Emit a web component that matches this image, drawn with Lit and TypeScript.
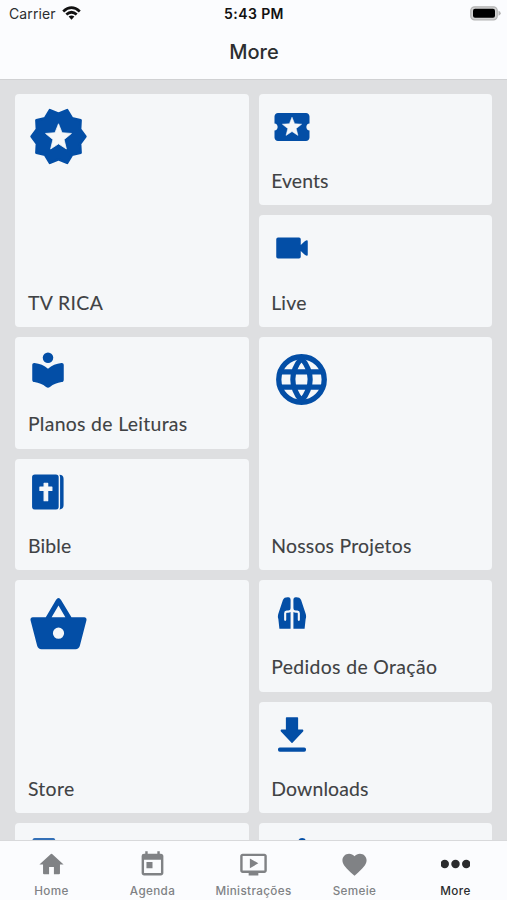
import { LitElement, html, svg, css, nothing } from "lit";
import { customElement, property } from "lit/decorators.js";

const icons: Record<string, unknown> = {
  badge: svg`<path stroke="currentColor" stroke-width="1" stroke-linejoin="round" d="M22.6 12 20.5 14.8 20.7 18.4 17.3 19.2 15.4 22.4 12 21 8.6 22.4 6.7 19.2 3.3 18.4 3.5 14.8 1.4 12 3.5 9.2 3.3 5.6 6.7 4.8 8.6 1.6 12 3 15.4 1.6 17.3 4.8 20.7 5.6 20.5 9.2Z"/><path class="cut" d="m12 7 1.4 3.5 3.7.3-2.9 2.4.9 3.7L12 14.9l-3.1 2 .9-3.7-2.9-2.4 3.7-.3Z"/>`,
  ticket: svg`<path d="M20.2 12c0-1.1.7-1.9 1.8-2V6c0-1.1-.9-2-2-2H4c-1.1 0-2 .9-2 2v4c1.1.1 1.8.9 1.8 2s-.7 1.9-1.8 2v4c0 1.1.9 2 2 2h16c1.1 0 2-.9 2-2v-4c-1.1-.1-1.8-.9-1.8-2z"/><path class="cut" d="m12 6.4 1.5 3.7 4 .3-3.1 2.5 1 3.9-3.4-2.2-3.4 2.2 1-3.9-3.1-2.5 4-.3Z"/>`,
  video: svg`<path d="M4 6h12a1 1 0 0 1 1 1v3.3l2.3-2.1Q21 7 21 8.3v7.4q0 1.3-1.7.1L17 13.7V17a1 1 0 0 1-1 1H4a1 1 0 0 1-1-1V7a1 1 0 0 1 1-1Z"/>`,
  reader: svg`<circle cx="12" cy="5" r="3"/><path d="M12 11.3C9.8 9.3 7.3 8.3 4.3 8 3.5 7.9 3 8.4 3 9.2v8.3c0 .8.5 1.3 1.2 1.4 2.6.4 4.7 1.2 6.7 2.8q1.1.9 2.2 0c2-1.6 4.1-2.4 6.7-2.8.7-.1 1.2-.6 1.2-1.4V9.2c0-.8-.5-1.3-1.3-1.2-3 .3-5.5 1.3-7.7 3.3Z"/>`,
  globe: svg`<g fill="none" stroke="currentColor" stroke-width="2.1"><circle cx="12" cy="12" r="8.95"/><path stroke-linejoin="bevel" d="M3.5 9h17M3.5 15h17M12 3.6C7.5 9 7.5 15 12 20.4 16.5 15 16.5 9 12 3.6Z"/></g>`,
  bible: svg`<path d="M4.5 2h12a1.6 1.6 0 0 1 1.6 1.6v16.8a1.6 1.6 0 0 1-1.6 1.6h-12A1.6 1.6 0 0 1 2.9 20.4V3.6A1.6 1.6 0 0 1 4.5 2ZM18.5 2.1c1.6.1 2.4.8 2.4 2.3v15.2c0 1.5-.8 2.2-2.4 2.4q.4-.6.4-1.5v-17q0-.8-.4-1.4Z"/><path class="cut bold" d="M9.8 7h2v2.200h2.400v1.900h-2.400V17h-2v-5.900H7.400V9.200h2.400Z"/>`,
  basket: svg`<path fill-rule="evenodd" d="M7 9.9 11 3.1q1-1.5 2 0l4.1 6.8h5q1.1.1.9 1.2l-2.6 10q-.4 1.3-1.7 1.4H5.3q-1.3-.1-1.7-1.4L1 11.1Q.8 10 1.9 9.9ZM12 5.3 9.3 9.9h5.4ZM9.8 16.2a2.2 2.2 0 1 0 4.4 0 2.2 2.2 0 1 0-4.4 0Z"/>`,
  hands: svg`<path d="M6.8 4.6C7.4 3.2 8.5 2.9 9.9 3c.9.1 1.300.7 1.300 1.5V21H4.800L4.200 15.400c-.4-1-.3-2 0-3ZM17.200 4.600C16.600 3.200 15.500 2.900 14.100 3c-.9.100-1.300.7-1.300 1.500V21h6.400l.6-5.600c.4-1 .3-2 0-3Z"/><path class="line" d="M8.100 15.900v-3.700q0-.9.900-1h.8Q12 11 12 8.800 12 11 14.200 11.200h.8q.9.100.9 1v3.700M12 6v16"/>`,
  download: svg`<path stroke="currentColor" stroke-width=".8" stroke-linejoin="round" d="M8.9 2.3h6.2v6.9h2.8q.4.3 0 .7L12 16.1 6.1 9.9q-.4-.4 0-.7h2.8Z"/><rect x="4" y="19.1" width="16" height="2.5" rx="1"/>`,
  copy: svg`<path opacity=".8" d="M4.5 1.7h10.5a1.3 1.3 0 0 1 1 1.9H3.300a1.3 1.3 0 0 1 1.2-1.9Z"/>`,
  person: svg`<circle cx="17.8" cy="3.9" r="2.2"/>`,
  home: svg`<path d="M10 20v-6h4v6h4.200q.8 0 .8-.8V12h3L12.500 3.400q-.5-.4-1 0L2 12h3v7.200q0 .8.800.8Z"/>`,
  today: svg`<path d="M19 3h-1V1h-2v2H8V1H6v2H5a2 2 0 0 0-2 2v14c0 1.100.9 2 2 2h14c1.100 0 2-.9 2-2V5c0-1.100-.9-2-2-2zm0 16H5V8h14zM7 10h5v5H7z"/>`,
  screen: svg`<path d="M21 3H3c-1.100 0-2 .9-2 2v12c0 1.100.9 2 2 2h5v2h8v-2h5c1.100 0 2-.9 2-2V5c0-1.100-.9-2-2-2zm0 14H3V5h18zm-5-6-7 4V7z"/>`,
  heart: svg`<path d="m12 21.350-1.450-1.320C5.400 15.360 2 12.280 2 8.500 2 5.420 4.420 3 7.500 3c1.740 0 3.410.81 4.500 2.090C13.090 3.810 14.760 3 16.500 3 19.580 3 22 5.420 22 8.500c0 3.780-3.400 6.860-8.550 11.540Z"/>`,
  dots: svg`<circle cx="3.1" cy="11.5" r="3.5"/><circle cx="12" cy="11.5" r="3.5"/><circle cx="20.9" cy="11.5" r="3.5"/>`,
};

interface Tile {
  label: string;
  icon: string;
  big?: boolean;
  spacing?: number;
}

const leftTiles: Tile[] = [
  { label: "TV RICA", icon: "badge", big: true, spacing: 0.4 },
  { label: "Planos de Leituras", icon: "reader", spacing: 0.32 },
  { label: "Bible", icon: "bible", spacing: 0.2 },
  { label: "Store", icon: "basket", big: true, spacing: 0.35 },
  { label: "", icon: "copy" },
];

const rightTiles: Tile[] = [
  { label: "Events", icon: "ticket", spacing: 0.1 },
  { label: "Live", icon: "video", spacing: 0.2 },
  { label: "Nossos Projetos", icon: "globe", big: true, spacing: 0.23 },
  { label: "Pedidos de Oração", icon: "hands", spacing: 0.36 },
  { label: "Downloads", icon: "download", spacing: 0.17 },
  { label: "", icon: "person" },
];

const tabs = [
  { label: "Home", icon: "home" },
  { label: "Agenda", icon: "today" },
  { label: "Ministrações", icon: "screen" },
  { label: "Semeie", icon: "heart" },
  { label: "More", icon: "dots", active: true },
];

@customElement("menu-tile")
class MenuTile extends LitElement {
  @property({ attribute: false }) tile!: Tile;

  static styles = css`
    :host { display: block; flex: none; }
    .tile {
      box-sizing: border-box;
      height: 111.7px;
      padding: 12px 12.5px 10.4px 12px;
      border-radius: 4px;
      background: #f5f7f9;
      color: #034ea6;
      display: flex;
      flex-direction: column;
      justify-content: space-between;
    }
    .big { height: 233.3px; }
    svg { display: block; width: 42px; height: 42px; fill: currentColor; overflow: visible; }
    .big svg { width: 61px; height: 61px; margin-left: 0.3px; }
    .cut { fill: #f5f7f9; stroke: #f5f7f9; stroke-width: 0.3; stroke-linejoin: round; }
    .bold { stroke-width: 0.7; }
    .line { fill: none; stroke: #f5f7f9; stroke-width: 1.2; stroke-linecap: round; }
    .label {
      margin-left: 0.5px;
      font: 400 19.4px/28px Lato, "Liberation Sans", sans-serif;
      color: #404244;
      -webkit-text-stroke: 0.1px #404244;
      white-space: nowrap;
    }
  `;

  render() {
    const t = this.tile;
    return html`<div class="tile ${t.big ? "big" : ""}">
      <svg viewBox="0 0 24 24">${icons[t.icon]}</svg>
      ${t.label
        ? html`<span class="label" style=${`letter-spacing:${t.spacing ?? 0}px`}>${t.label}</span>`
        : nothing}
    </div>`;
  }
}

@customElement("app-root")
class AppRoot extends LitElement {
  static styles = css`
    :host {
      display: flex;
      flex-direction: column;
      height: 900px;
      overflow: hidden;
      background: #dedfe1;
      font-family: Inter, "Liberation Sans", sans-serif;
      color: #2c2e30;
    }
    .header {
      box-sizing: border-box;
      flex: none;
      height: 80px;
      background: #fbfcfe;
      border-bottom: 1px solid #d0d1d3;
    }
    .status {
      display: grid;
      grid-template-columns: 1fr auto 1fr;
      align-items: center;
      height: 27px;
      padding: 0 6px 0 9px;
    }
    .carrier { display: flex; align-items: center; gap: 6px; font-size: 14px; letter-spacing: 0.1px; }
    .wifi { width: 19px; height: 14px; display: block; margin-top: -2px; }
    .time { margin-right: 2px; font-size: 14px; font-weight: 600; color: #111; letter-spacing: 0.4px; }
    .battery { justify-self: end; width: 31px; height: 15px; display: block; }
    .title {
      margin: 0;
      padding-left: 1px;
      text-align: center;
      font-size: 20px;
      line-height: 51px;
      font-weight: 500;
      color: #2c2e30;
    }
    .grid {
      flex: 1;
      min-height: 0;
      overflow: hidden;
      display: grid;
      grid-template-columns: 1fr 1fr;
      gap: 10px;
      padding: 13.8px 15px 0 15.4px;
      align-items: start;
    }
    .column { display: flex; flex-direction: column; gap: 9.9px; }
    .tabs {
      box-sizing: border-box;
      flex: none;
      height: 60px;
      display: grid;
      grid-template-columns: repeat(5, 1fr);
      padding: 0 1px;
      background: #fbfcfe;
      border-top: 1px solid #d8d9db;
    }
    .tab {
      display: flex;
      flex-direction: column;
      align-items: center;
      padding-top: 8.5px;
      color: #808285;
      font-size: 11.7px;
      line-height: 16px;
      font-weight: 500;
      letter-spacing: 0.35px;
    }
    .tab svg { width: 29px; height: 29px; fill: currentColor; margin-bottom: 4px; }
    .active { color: #2a2b2d; }
  `;

  render() {
    return html`
      <header class="header">
        <div class="status">
          <div class="carrier">
            <span>Carrier</span>
            <svg class="wifi" viewBox="0 0 19 14">
              <path fill="none" stroke="#111" stroke-width="2.7" d="M1.2 5.4Q9.5-2.2 17.8 5.4M4.3 8.6Q9.5 3.9 14.7 8.6"/>
              <path fill="#111" d="M6.6 10.6Q9.5 8.2 12.4 10.6L9.5 13.7Z"/>
            </svg>
          </div>
          <span class="time">5:43 PM</span>
          <svg class="battery" viewBox="0 0 31 15">
            <rect x=".8" y=".8" width="26.4" height="13" rx="3.8" fill="#d2d2d2" stroke="#b4b4b4" stroke-width="1.3"/>
            <rect x="3" y="2.8" width="22" height="9" rx="2" fill="#000"/>
            <path fill="#b4b4b4" d="M28.5 4.8q2.2.7 2.2 2.5t-2.2 2.5Z"/>
          </svg>
        </div>
        <h1 class="title">More</h1>
      </header>
      <main class="grid">
        ${[leftTiles, rightTiles].map(
          (col) => html`<div class="column">${col.map((t) => html`<menu-tile .tile=${t}></menu-tile>`)}</div>`
        )}
      </main>
      <nav class="tabs">
        ${tabs.map(
          (t) => html`<div class="tab ${t.active ? "active" : ""}">
            <svg viewBox="0 0 24 24">${icons[t.icon]}</svg>
            <span>${t.label}</span>
          </div>`
        )}
      </nav>
    `;
  }
}
